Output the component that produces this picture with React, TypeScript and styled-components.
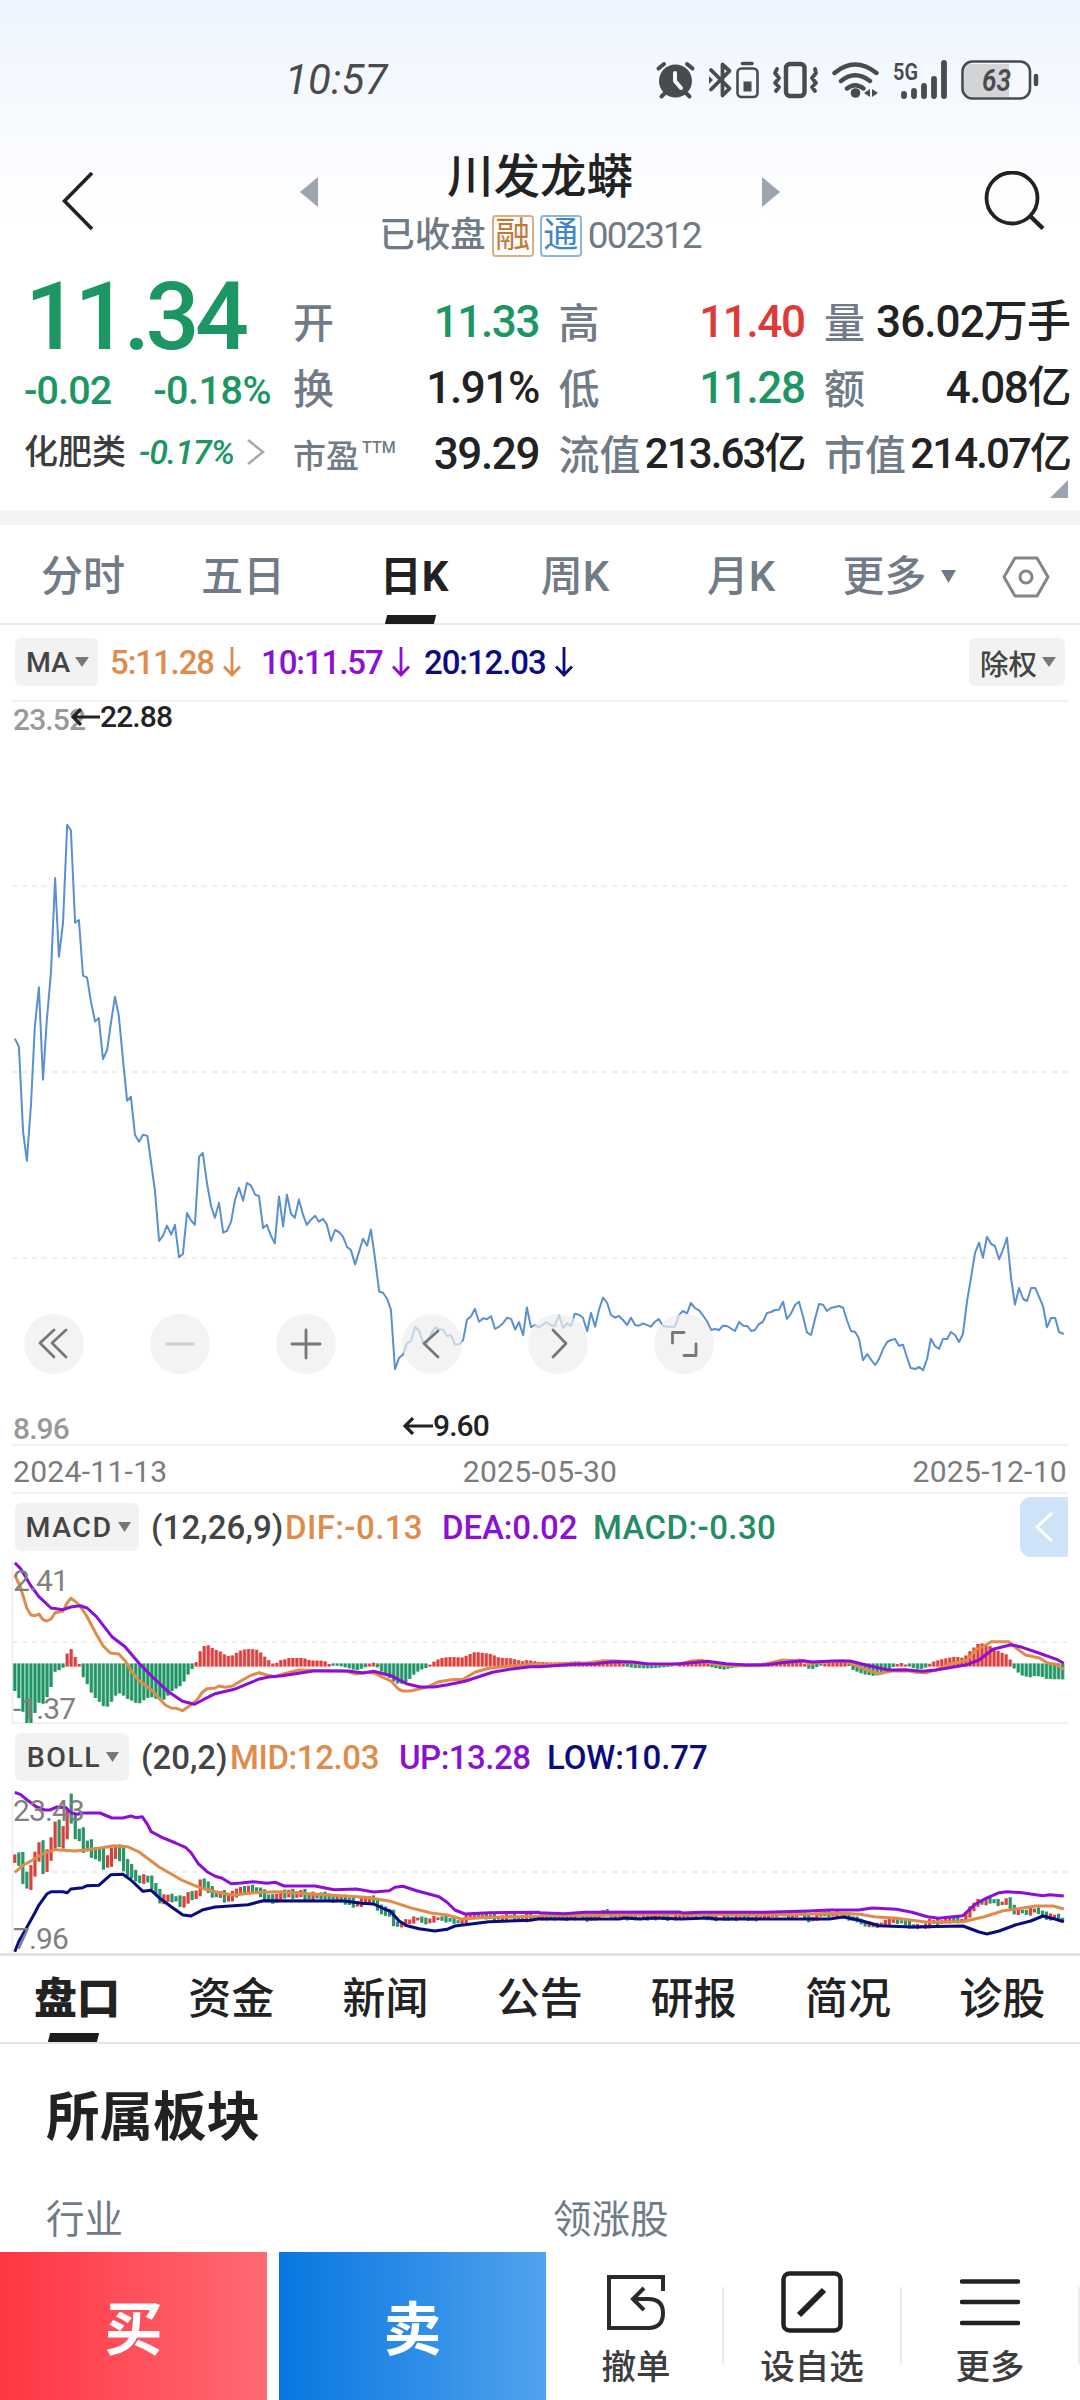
import React from "react";
import styled, { createGlobalStyle } from "styled-components";

const INK = "#222222";
const SLATE = "#707b87";
const GREEN = "#1c9663";
const RED = "#dd3b38";
const ORANGE = "#df8c4b";
const PURPLE = "#8b0fd4";
const NAVY = "#0b0b80";

const Global = createGlobalStyle`
  * { box-sizing: border-box; }
  body { margin: 0; background: #fff; }
  svg { display: block; flex: none; }
`;

const Page = styled.div`
  width: 1080px;
  height: 2400px;
  overflow: hidden;
  display: flex;
  flex-direction: column;
  background: #fff;
  color: ${INK};
  line-height: 1;
  white-space: nowrap;
  font-family: Roboto, "Noto Sans CJK SC", sans-serif;
`;

const Txt = styled.span<{ $s: number; $c?: string; $w?: number; $ls?: number; $dy?: number }>`
  font-size: ${(p) => p.$s}px;
  color: ${(p) => p.$c ?? INK};
  font-weight: ${(p) => p.$w ?? 400};
  letter-spacing: ${(p) => p.$ls ?? 0}px;
  padding-top: ${(p) => p.$dy ?? 0}px;
`;

/* ---------- header ---------- */

const Top = styled.header`
  flex: none;
  height: 265px;
  background: linear-gradient(#eef5ff, #fff 82%);
`;

const StatusBar = styled.div`
  height: 120px;
  padding: 40px 36px 0 285px;
  display: flex;
  align-items: center;
  justify-content: space-between;
`;

const Clock = styled.span`
  font-size: 42px;
  font-style: italic;
  letter-spacing: 0.2px;
  color: #4a4b4d;
`;

const StatusIcons = styled.div`
  display: flex;
  align-items: center;
`;

const Nav = styled.div`
  height: 145px;
  padding: 28px 35px 0 62px;
  display: flex;
`;

const NavIcon = styled.div<{ $end?: boolean }>`
  padding-top: 23px;
  margin-left: ${(p) => (p.$end ? "auto" : "0")};
`;

const TitleBlock = styled.div`
  width: 480px;
  display: flex;
  flex-direction: column;
  align-items: center;
  margin-left: 206px;
`;

const TitleRow = styled.div`
  width: 480px;
  height: 58px;
  display: flex;
  align-items: center;
  justify-content: space-between;
`;

const Arrow = styled.svg`
  margin-top: 30px;
`;

const SubRow = styled.div`
  height: 65px;
  display: flex;
  align-items: center;
  gap: 6px;
`;

const Badge = styled.span<{ $c: string }>`
  width: 42px;
  height: 42px;
  display: grid;
  place-items: center;
  border: 2px solid ${(p) => p.$c}99;
  border-radius: 4px;
  font-size: 35px;
  color: ${(p) => p.$c};
`;

/* ---------- quote ---------- */

const Quote = styled.section`
  flex: none;
  height: 245px;
  padding: 24px 10px 0 24px;
  display: flex;
  gap: 22px;
  position: relative;
`;

const PriceCol = styled.div`
  width: 247px;
`;

const PriceRow = styled.div<{ $lift?: number; $drop?: number }>`
  height: 66px;
  padding-bottom: ${(p) => p.$lift ?? 0}px;
  padding-top: ${(p) => p.$drop ?? 0}px;
  display: flex;
  align-items: center;
  justify-content: space-between;
`;

const Big = styled.span`
  font-size: 95px;
  font-weight: 500;
  letter-spacing: -4.6px;
  margin-left: 1px;
  color: ${GREEN};
`;

const Stats = styled.div`
  flex: 1;
  display: grid;
  grid-template-columns: repeat(3, 246px);
  grid-auto-rows: 66px;
  column-gap: 19.5px;
`;

const Stat = styled.div`
  display: flex;
  align-items: center;
  justify-content: space-between;
`;

const Sup = styled.sup`
  font-size: 16px;
  vertical-align: 15px;
  line-height: 0;
  margin-left: 3px;
`;

const Corner = styled.svg`
  position: absolute;
  right: 12px;
  bottom: 12px;
`;

const Band = styled.div`
  flex: none;
  height: 15px;
  background: #f4f4f4;
`;

/* ---------- period tabs ---------- */

const Periods = styled.nav`
  flex: none;
  height: 100px;
  display: flex;
  border-bottom: 2px solid #ececec;
`;

const Period = styled.div<{ $x: number; $on?: boolean; $gap?: number; $pl?: number }>`
  width: ${(p) => p.$x}px;
  height: 99px;
  flex: none;
  display: flex;
  align-items: center;
  justify-content: center;
  gap: ${(p) => p.$gap ?? 0}px;
  position: relative;
  font-size: 42px;
  font-weight: ${(p) => (p.$on ? 700 : 500)};
  color: ${(p) => (p.$on ? INK : SLATE)};
  padding-top: 4px;
  padding-left: ${(p) => p.$pl ?? 0}px;
`;

const Mark = styled.i`
  position: absolute;
  bottom: 0;
  left: 50%;
  width: 49px;
  height: 9px;
  margin-left: -28px;
  background: #1c1c1c;
  transform: skewX(-14deg);
`;

/* ---------- indicators ---------- */

const Legend = styled.div<{ $h: number; $top: number; $right?: number }>`
  flex: none;
  height: ${(p) => p.$h}px;
  padding: ${(p) => p.$top}px ${(p) => p.$right ?? 12}px 0 15px;
  display: flex;
  align-items: flex-start;
`;

const Pick = styled.button<{ $w: number; $gap?: number }>`
  width: ${(p) => p.$w}px;
  height: 48px;
  flex: none;
  border: 0;
  padding: 0 0 0 2px;
  border-radius: 6px;
  background: #f2f2f2;
  color: #444;
  font: 500 28.5px Roboto, "Noto Sans CJK SC", sans-serif;
  letter-spacing: ${(p) => p.$gap ?? 0}px;
  display: flex;
  align-items: center;
  justify-content: center;
  gap: 5px;
`;

const Item = styled.span<{ $c: string; $w: number; $ls?: number; $pad?: number }>`
  width: ${(p) => p.$w}px;
  height: 48px;
  flex: none;
  padding-left: ${(p) => p.$pad ?? 0}px;
  display: flex;
  align-items: center;
  gap: 9px;
  font-size: 33px;
  font-weight: 500;
  letter-spacing: ${(p) => p.$ls ?? -1.1}px;
  color: ${(p) => p.$c};
`;

const Spacer = styled.div`
  flex: 1;
`;

const SideTab = styled.div`
  width: 48px;
  height: 60px;
  margin-top: -6px;
  border-radius: 11px 0 0 11px;
  background: #cee3f7;
  display: grid;
  place-items: center;
`;

const Pane = styled.div<{ $h: number }>`
  flex: none;
  height: ${(p) => p.$h}px;
  position: relative;
`;

const Label = styled.span<{ $x: number; $y: number; $c?: string; $w?: number }>`
  position: absolute;
  left: ${(p) => p.$x}px;
  top: ${(p) => p.$y}px;
  display: flex;
  align-items: center;
  font-size: 30px;
  letter-spacing: -0.9px;
  font-weight: ${(p) => p.$w ?? 400};
  color: ${(p) => p.$c ?? "#808080"};
`;

const Controls = styled.div`
  position: absolute;
  left: 24px;
  top: 614px;
  display: flex;
  gap: 66px;
`;

const Round = styled.button`
  width: 60px;
  height: 60px;
  padding: 0;
  border: 0;
  border-radius: 50%;
  background: rgba(238, 238, 238, 0.7);
`;

const Dates = styled.div`
  flex: none;
  height: 48px;
  margin: 0 12px;
  padding: 5px 1px 0 1px;
  border-bottom: 2px solid #efefef;
  display: flex;
  align-items: center;
  justify-content: space-between;
  font-size: 30px;
  letter-spacing: 0.3px;
  color: #7b7b7b;
`;

/* ---------- detail tabs and sectors ---------- */

const Tabs = styled.nav`
  flex: none;
  height: 91px;
  border-top: 3px solid #e4e4e4;
  border-bottom: 2px solid #e4e4e4;
  display: grid;
  grid-template-columns: repeat(7, 154.2px);
  margin-right: -12px;
`;

const Tab = styled.div<{ $on?: boolean }>`
  display: flex;
  align-items: center;
  justify-content: center;
  position: relative;
  font-size: 43px;
  font-weight: ${(p) => (p.$on ? 800 : 500)};
`;

const Sectors = styled.section`
  flex: none;
  height: 208px;
  padding: 39px 46px 0;
`;

const Heading = styled.h2`
  margin: 0;
  font-size: 53.5px;
  line-height: 60px;
  font-weight: 700;
  font-family: "Noto Sans CJK SC", sans-serif;
`;

const Cols = styled.div`
  display: grid;
  grid-template-columns: 507px 1fr;
  padding-top: 58px;
  font-size: 38.5px;
  color: ${SLATE};
`;

/* ---------- trade bar ---------- */

const TradeBar = styled.footer`
  flex: none;
  height: 148px;
  display: flex;
  background: #fff;
`;

const Trade = styled.button<{ $from: string; $to: string }>`
  width: 267px;
  margin-right: 12px;
  border: 0;
  padding: 0 0 2px;
  background: linear-gradient(90deg, ${(p) => p.$from}, ${(p) => p.$to});
  color: #fff;
  font: 700 58px Roboto, "Noto Sans CJK SC", sans-serif;
`;

const Tool = styled.div<{ $w: number; $pr?: number }>`
  width: ${(p) => p.$w}px;
  height: 77px;
  margin-top: 35px;
  padding-right: ${(p) => p.$pr ?? 0}px;
  border-right: 2px solid #ececec;
  display: flex;
  flex-direction: column;
  align-items: center;
  font-size: 34.5px;
  font-weight: 500;
  color: #3d3d3d;
  & > svg { margin: -16px 0 17px; }
`;

/* ---------- data ---------- */

type Pt = [number, number];

const parse = (s: string): Pt[] =>
  s.trim().split(/\s+/).map((q) => q.split(",").map(Number) as Pt);

const KX = 1568 / 540;

/** Joins the two halves of a series into one list in page units. */
const series = (left: string, right: string, kyL: number, kyR: number, y0L = 0, y0R = 0): Pt[] => [
  ...parse(left).map(([x, y]): Pt => [x / KX, y0L + y / kyL]),
  ...parse(right).map(([x, y]): Pt => [540 + x / KX, y0R + y / kyR]),
];

const path = (pts: Pt[]) => pts.map(([x, y]) => `${x.toFixed(1)},${y.toFixed(1)}`).join(" ");

const at = (pts: Pt[], x: number) => {
  let i = 1;
  while (i < pts.length - 1 && pts[i][0] < x) i++;
  const [a, b] = [pts[i - 1], pts[i]];
  const t = Math.min(1, Math.max(0, (x - a[0]) / (b[0] - a[0] || 1)));
  return a[1] + (b[1] - a[1]) * t;
};

const price = series(
  `43,654 55,674 67,890 78,963 90,820 101,625 113,524 125,758 136,608 148,485 160,248 171,447 183,362 195,113 206,127 218,361 229,354 241,495 253,500 264,560 276,611 287,602 299,706 311,683 322,615 334,548 345,596 357,705 369,811 380,801 392,898 404,915 415,897 428,900 439,970 450,1040 462,1166 473,1153 485,1127 497,1150 508,1125 520,1207 531,1199 543,1095 555,1114 566,1125 578,953 589,943 601,1020 613,1078 624,1107 636,1069 648,1145 659,1140 671,1117 682,1063 694,1031 706,1064 717,1019 729,1026 741,1049 752,1052 764,1133 775,1125 787,1153 798,1172 810,1053 822,1129 833,1049 845,1097 856,1107 868,1061 880,1100 891,1125 903,1112 915,1102 926,1117 938,1110 949,1124 961,1166 973,1138 984,1143 996,1155 1008,1181 1019,1189 1031,1225 1042,1194 1054,1160 1066,1178 1077,1137 1089,1210 1101,1294 1112,1297 1124,1312 1135,1339 1147,1490 1159,1461 1170,1454 1182,1424 1194,1418 1205,1383 1217,1393 1229,1425 1240,1424 1252,1400 1263,1385 1275,1389 1287,1390 1298,1406 1310,1404 1321,1428 1333,1428 1345,1416 1356,1365 1368,1356 1379,1337 1391,1370 1403,1361 1414,1364 1426,1356 1437,1388 1449,1383 1461,1373 1472,1360 1484,1363 1496,1390 1507,1371 1519,1404 1530,1334 1542,1384 1554,1378 1563,1384`,
  `0,440 18,426 32,436 43,438 55,405 67,444 78,430 90,438 101,401 113,404 125,413 137,454 148,398 160,440 171,390 183,353 195,369 206,405 218,413 229,408 241,420 253,435 264,413 276,435 287,437 299,430 322,440 333,426 345,417 357,437 368,440 392,440 404,405 415,393 427,400 438,369 450,384 462,391 474,407 485,424 497,450 508,447 520,450 531,437 543,438 566,453 578,426 590,437 602,438 613,453 624,450 636,432 647,426 659,399 671,396 682,390 694,389 706,365 717,417 729,400 741,374 752,365 764,410 775,457 787,465 799,415 810,372 822,374 833,393 845,384 868,378 880,383 892,423 903,453 915,456 926,475 938,541 950,522 961,539 973,555 984,538 996,508 1008,486 1019,480 1031,477 1042,497 1054,494 1065,530 1076,564 1090,567 1101,561 1112,571 1124,537 1135,476 1147,498 1159,507 1170,477 1182,477 1193,456 1205,465 1217,486 1228,462 1240,365 1252,290 1263,219 1275,188 1286,233 1298,170 1310,192 1321,198 1333,238 1345,207 1356,173 1368,295 1379,374 1391,324 1403,357 1414,363 1426,324 1438,324 1449,350 1461,380 1472,442 1484,414 1496,414 1507,456 1521,462`,
  1568 / 620, 3, 80, 480
);

const dif = series(
  `43,285 58,318 78,385 90,405 102,407 113,402 125,419 136,423 148,417 160,398 183,393 195,368 206,355 218,364 232,378 250,405 276,456 299,497 320,519 345,522 363,542 386,580 404,602 440,630 462,655 480,675 497,684 512,685 530,692 555,674 572,660 587,637 601,626 625,624 636,618 655,622 675,618 700,602 729,586 752,578 775,585 798,590 822,582 868,570 950,572 1000,573 1035,582 1060,577 1089,580 1112,592 1135,603 1158,628 1170,633 1195,632 1240,621 1275,605 1310,599 1345,598 1380,576 1420,565 1480,558 1566,552`,
  `0,555 60,551 130,550 185,543 230,543 290,551 370,554 415,550 440,543 470,541 500,551 545,557 640,557 670,548 706,540 740,543 752,540 770,545 785,554 800,548 880,542 915,556 950,570 985,581 1020,573 1070,572 1090,577 1120,578 1150,570 1190,553 1240,540 1265,510 1290,498 1310,485 1360,485 1390,510 1410,525 1450,534 1475,550 1495,552 1521,568`,
  3, 3, -81, -81
);

const dea = series(
  `43,248 60,266 90,318 113,350 148,384 183,389 206,381 232,377 253,384 280,410 325,470 363,500 404,550 440,588 485,632 530,664 565,673 590,659 625,641 680,628 750,598 780,591 820,587 910,573 1010,573 1055,579 1085,574 1135,587 1180,611 1220,621 1260,621 1300,614 1350,604 1430,577 1480,568 1540,560 1566,560`,
  `0,560 100,553 160,551 210,545 270,546 310,551 400,552 485,544 540,551 600,555 660,554 700,548 765,542 790,546 850,543 900,543 950,556 1010,570 1060,569 1110,574 1150,570 1240,554 1275,540 1315,508 1368,494 1400,502 1440,516 1500,538 1521,550`,
  3, 3, -81, -81
);

const histogram = series(
  `43,633 55,655 67,697 78,735 90,735 101,700 113,668 125,671 136,653 148,622 160,575 172,570 183,564 195,521 206,506 218,530 229,548 241,590 253,611 264,636 276,653 287,663 299,678 311,681 322,668 334,648 345,639 357,645 369,656 380,660 392,668 404,671 415,662 428,654 439,651 450,655 462,660 473,662 485,650 497,635 508,627 520,621 531,611 543,588 555,570 566,558 578,520 589,500 601,494 613,502 624,509 636,512 648,521 659,528 671,529 682,522 694,513 717,507 741,508 752,512 764,526 775,536 787,546 798,557 810,539 822,542 833,534 880,534 903,542 938,542 949,546 961,557 984,557 1008,563 1031,570 1042,570 1054,564 1066,560 1077,545 1089,550 1101,570 1112,577 1124,585 1135,598 1147,608 1159,612 1170,610 1182,605 1194,592 1205,580 1217,572 1229,566 1240,563 1252,550 1263,543 1275,537 1287,533 1310,531 1345,533 1356,526 1380,516 1426,522 1449,533 1484,535 1519,544 1530,540 1566,546`,
  `0,546 40,548 110,544 150,548 183,539 230,541 241,550 253,560 276,564 320,565 380,560 404,553 415,546 450,540 485,544 497,561 531,569 560,563 630,556 648,549 706,537 752,538 764,544 775,563 787,569 799,563 815,557 833,547 870,543 890,547 903,567 938,582 973,588 1008,575 1031,557 1042,549 1054,549 1066,557 1090,566 1112,567 1124,560 1135,547 1170,537 1205,530 1230,534 1250,512 1275,489 1298,493 1321,508 1345,520 1356,524 1368,543 1379,570 1391,579 1403,588 1426,592 1438,587 1461,591 1472,597 1521,598`,
  3, 3, -81, -81
);

const upper = series(
  `43,217 60,224 80,241 105,260 130,270 145,270 165,261 192,263 206,278 225,283 240,279 290,279 325,294 357,294 380,288 395,293 413,290 428,313 439,335 470,352 510,369 540,383 555,398 575,430 601,455 625,469 645,475 671,491 700,489 735,485 775,490 800,487 825,498 915,498 970,509 1035,507 1085,516 1130,512 1147,502 1170,499 1210,512 1275,530 1298,547 1321,570 1350,582 1420,578 1566,577`,
  `0,578 70,581 130,577 405,576 415,579 470,577 650,577 780,573 840,570 925,570 965,564 1035,568 1080,577 1125,590 1158,595 1185,592 1228,587 1263,553 1295,535 1333,518 1356,515 1400,518 1460,527 1480,524 1521,528`,
  3, 3, -71, -71
);

const middle = series(
  `43,457 67,436 95,420 125,401 160,389 220,393 280,386 330,377 370,380 404,396 462,441 531,482 580,503 640,519 680,525 740,518 800,515 1060,532 1135,544 1194,564 1252,579 1298,585 1340,597 1400,593 1566,588`,
  `0,586 130,586 405,583 700,584 800,582 870,580 930,583 970,590 1035,595 1120,606 1228,605 1290,590 1345,572 1403,564 1440,558 1490,558 1521,567`,
  3, 3, -71, -71
);

const lower = series(
  `43,695 55,664 78,622 101,579 113,555 136,522 148,515 183,515 195,518 206,507 240,503 253,497 287,496 322,464 357,463 380,480 415,514 439,511 462,533 497,560 531,585 555,588 590,569 625,561 720,554 764,542 1000,543 1050,550 1085,552 1112,565 1135,575 1159,603 1182,617 1217,626 1263,633 1298,628 1321,618 1420,605 1540,601 1566,596`,
  `0,597 230,597 245,594 290,597 330,594 410,597 490,594 510,597 840,597 880,591 925,600 985,617 1080,621 1228,618 1275,636 1298,642 1333,633 1380,615 1425,603 1460,588 1495,597 1521,605`,
  3, 3, -71, -71
);

const STEP = 4.03;
const days = Array.from({ length: 261 }, (_, i) => 14.8 + i * STEP);

/** Maps a y of the price pane to the y of the band pane. */
const toBand = (y: number) => {
  const value = 23.52 - (y / 744) * 14.56;
  return ((23.43 - value) / 15.47) * 162;
};

/* ---------- small drawings ---------- */

const Down = ({ w, h, c = "#777" }: { w: number; h: number; c?: string }) => (
  <svg width={w} height={h} viewBox="0 0 10 10" preserveAspectRatio="none">
    <path d="M0 0H10L5 10Z" fill={c} />
  </svg>
);

const Drop = ({ c }: { c: string }) => (
  <svg width="18" height="30" viewBox="0 0 18 30" fill="none" stroke={c} strokeWidth="2.8">
    <path d="M9 0V28M1 19.500L9 28L17 19.500" />
  </svg>
);

const Left = ({ w }: { w: number }) => (
  <svg width={w} height="18" viewBox={`0 0 ${w} 18`} fill="none" stroke={INK} strokeWidth="3.200">
    <path d={`M${w} 9H2M10 1L2 9L10 17`} />
  </svg>
);

const glyphs = [
  "M30 16L16 29L30 43M42 16L28 29L42 43",
  "M17 30H43",
  "M16 30H44M30 16V44",
  "M36 17L22 29.500L36 43",
  "M25 16L38 29.500L25 43",
  "M18.500 29V18.500H30M30 41.500H42V30",
];

const Divider = ({ y }: { y: number }) => (
  <line x1="12" x2="1068" y1={y} y2={y} stroke="#efefef" strokeWidth="2" strokeDasharray="5 5" />
);

const G = "#4a4b4d";

const StatusDrawings = () => (
  <StatusIcons>
    <svg width="390" height="44" viewBox="654 58 390 44" fill="none" stroke={G} strokeWidth="3.500" strokeLinecap="round" strokeLinejoin="round">
      <circle cx="675.500" cy="81" r="16.500" fill={G} stroke="none" />
      <path d="M658.500 68.500L664 64M692.500 68.500L687 64M665 93L661.500 96.500M686 93L689.500 96.500" strokeWidth="4" />
      <path d="M675 73V81L681 88" stroke="#f5f9ff" strokeWidth="4" />
      <path d="M711 70L729.500 88.500L722.500 95.500V64.500L729.500 71L711 89.500" strokeWidth="3.800" />
      <path d="M709 76V84L713 80Z" fill={G} stroke="none" />
      <rect x="737.500" y="68.500" width="20" height="28.500" rx="4" strokeWidth="2.600" />
      <path d="M742.500 63.500H752" />
      <rect x="743.500" y="81.500" width="8" height="10" fill={G} stroke="none" />
      <rect x="786" y="64" width="18.500" height="32" rx="4" strokeWidth="4.400" />
      <path d="M777 69L775 73L779 78L775 83L779 87L776 91M815 69L816 73L812 78L816 83L812 87L815 91" strokeWidth="3.800" />
      <path d="M834.500 73Q855 56 876.500 73M841 81Q855 69.500 870 81M847 88.500Q855 82 863.500 88.500" strokeWidth="4.400" />
      <circle cx="855.500" cy="93" r="4.800" fill={G} stroke="none" />
      <path d="M864 93L870 89V97ZM878 93L872 89V97Z" fill={G} stroke="none" />
      <path d="M904 97V99M914 94V99M924 89V99M934 82V99M944 66V99" transform="translate(0 -3)" strokeWidth="5.800" />
      <path d="M964.500 64H1009V97H972Q964 97 964 89Z" fill="#d2d4d8" stroke="none" />
      <rect x="962.500" y="61.500" width="67.500" height="37" rx="10" strokeWidth="2.600" />
      <path d="M1036 76V84" strokeWidth="4.500" />
      <text x="893" y="80" fill={G} stroke="none" fontSize="24" fontWeight="600" fontFamily="Roboto, sans-serif" textLength="25" lengthAdjust="spacingAndGlyphs">5G</text>
      <text x="982" y="91" fill={G} stroke="none" fontSize="32" fontWeight="600" fontStyle="italic" fontFamily="Roboto, sans-serif" textLength="29" lengthAdjust="spacingAndGlyphs">63</text>
    </svg>
  </StatusIcons>
);

const stats: { k: React.ReactNode; v: string; c?: string; ks?: number; vs?: number; ls?: number }[] = [
  { k: "开", v: "11.33", c: GREEN },
  { k: "高", v: "11.40", c: RED },
  { k: "量", v: "36.02万手", ls: -0.9 },
  { k: "换", v: "1.91%" },
  { k: "低", v: "11.28", c: GREEN },
  { k: "额", v: "4.08亿" },
  { k: <>市盈<Sup>TTM</Sup></>, v: "39.29", ks: 33 },
  { k: "流值", v: "213.63亿", vs: 42, ls: -1.9 },
  { k: "市值", v: "214.07亿", vs: 42, ls: -1.9 },
];

export default function App() {
  return (
    <Page>
      <Global />
      <Top>
        <StatusBar>
          <Clock>10:57</Clock>
          <StatusDrawings />
        </StatusBar>
        <Nav>
          <NavIcon>
            <svg width="32" height="60" viewBox="0 0 32 60" fill="none" stroke={INK} strokeWidth="3.600">
              <path d="M30 2L2.500 30L30 58" />
            </svg>
          </NavIcon>
          <TitleBlock>
            <TitleRow>
              <Arrow width="18" height="30"><path d="M18 0V30L0 15Z" fill="#9ba4af" /></Arrow>
              <Txt $s={46.5} $w={500}>川发龙蟒</Txt>
              <Arrow width="18" height="30"><path d="M0 0V30L18 15Z" fill="#9ba4af" /></Arrow>
            </TitleRow>
            <SubRow>
              <Txt $s={35.5} $w={500} $c={SLATE}>已收盘</Txt>
              <Badge $c="#c07a35">融</Badge>
              <Badge $c="#3f86c4">通</Badge>
              <Txt $s={37} $c={SLATE} $ls={-2} $w={400}>002312</Txt>
            </SubRow>
          </TitleBlock>
          <NavIcon $end>
            <svg width="61" height="60" viewBox="0 0 61 60" fill="none" stroke={INK} strokeWidth="3.800">
              <circle cx="28" cy="27" r="25.500" />
              <path d="M46 45L59 57.500" strokeWidth="4.500" />
            </svg>
          </NavIcon>
        </Nav>
      </Top>

      <Quote>
        <PriceCol>
          <PriceRow $lift={11}><Big>11.34</Big></PriceRow>
          <PriceRow $drop={5}>
            <Txt $s={39.5} $w={500} $c={GREEN} $ls={-0.9}>-0.02</Txt>
            <Txt $s={39.5} $w={500} $c={GREEN} $ls={-0.5}>-0.18%</Txt>
          </PriceRow>
          <PriceRow $lift={5}>
            <Txt $s={34} $w={500} $c="#3c3c3c">化肥类</Txt>
            <Txt $s={34} $w={500} $c={GREEN} $ls={-1}><i>-0.17%</i></Txt>
            <svg width="24" height="26" viewBox="0 0 24 26" fill="none" stroke="#a3abb5" strokeWidth="2.500">
              <path d="M1 1L16 13L1 25" />
            </svg>
          </PriceRow>
        </PriceCol>
        <Stats>
          {stats.map((q, i) => (
            <Stat key={i}>
              <Txt $s={q.ks ?? 41} $w={500} $c={SLATE} $dy={4}>{q.k}</Txt>
              <Txt $s={q.vs ?? 44} $w={500} $c={q.c} $ls={q.ls ?? -1.4}>{q.v}</Txt>
            </Stat>
          ))}
        </Stats>
        <Corner width="18" height="18"><path d="M18 0V18H0Z" fill="#9ba4af" /></Corner>
      </Quote>
      <Band />

      <Periods>
        <Period $x={166}>分时</Period>
        <Period $x={154}>五日</Period>
        <Period $x={188} $on>日K<Mark /></Period>
        <Period $x={134}>周K</Period>
        <Period $x={198}>月K</Period>
        <Period $x={118} $gap={14}>更多<Down w={15} h={13} c={SLATE} /></Period>
        <Period $x={122} $pl={14}>
          <svg width="48" height="42" viewBox="0 0 48 42" fill="none" stroke="#858585" strokeWidth="3">
            <path d="M13 2H35L46 21L35 40H13L2 21Z" strokeLinejoin="round" />
            <circle cx="24" cy="21" r="6" />
          </svg>
        </Period>
      </Periods>

      <Legend $h={75} $top={13} $right={15}>
        <Pick $w={83}>MA<Down w={14} h={10} /></Pick>
        <Item $c={ORANGE} $w={163} $pad={12}>5:11.28<Drop c={ORANGE} /></Item>
        <Item $c={PURPLE} $w={163}>10:11.57<Drop c={PURPLE} /></Item>
        <Item $c={NAVY} $w={170}>20:12.03<Drop c={NAVY} /></Item>
        <Spacer />
        <Pick $w={96}>除权<Down w={14} h={10} /></Pick>
      </Legend>

      <Pane $h={746}>
        <svg width="1080" height="746" viewBox="0 0 1080 746" fill="none">
          <path d="M12 1H1068M12 745H1068" stroke="#f0f0f0" strokeWidth="2" />
          <Divider y={186} /><Divider y={372} /><Divider y={558} />
          <polyline points={path(price)} stroke="#5a8fd0" strokeWidth="2" strokeLinejoin="round" />
        </svg>
        <Label $x={13} $y={5} $c="#999" $w={500}>23.52</Label>
        <Label $x={71} $y={2} $c={INK} $w={500}><Left w={29} />22.88</Label>
        <Label $x={13} $y={714} $c="#999" $w={500}>8.96</Label>
        <Label $x={403} $y={711} $c={INK} $w={500}><Left w={30} />9.60</Label>
        <Controls>
          {glyphs.map((d, i) => (
            <Round key={i}>
              <svg width="60" height="60" fill="none" stroke={i === 1 ? "#ccc" : "#777"} strokeWidth="2.800" strokeLinecap="round" strokeLinejoin="round">
                <path d={d} />
              </svg>
            </Round>
          ))}
        </Controls>
      </Pane>

      <Dates>
        <span>2024-11-13</span>
        <span>2025-05-30</span>
        <span>2025-12-10</span>
      </Dates>

      <Legend $h={67} $top={9}>
        <Pick $w={124} $gap={1.5}>MACD<Down w={13} h={10} /></Pick>
        <Item $c="#444" $w={146} $pad={12} $ls={0.1}>(12,26,9)</Item>
        <Item $c={ORANGE} $w={157} $ls={0.4}>DIF:-0.13</Item>
        <Item $c={PURPLE} $w={151} $ls={-0.1}>DEA:0.02</Item>
        <Item $c="#268c63" $w={190} $ls={0.4}>MACD:-0.30</Item>
        <Spacer />
        <SideTab>
          <svg width="18" height="30" viewBox="0 0 18 30" fill="none" stroke="#fff" strokeWidth="3">
            <path d="M17 1L2 15L17 29" />
          </svg>
        </SideTab>
      </Legend>

      <Pane $h={163}>
        <svg width="1080" height="163" viewBox="0 0 1080 163" fill="none">
          <path d="M12.500 0V162H1068" stroke="#ebebeb" strokeWidth="1.500" />
          <Divider y={81} />
          {days.map((x, i) => {
            const tip = Math.min(at(histogram, x), 162);
            const up = tip < 104;
            const base = up ? 105.5 : 102.500;
            return (
              <g key={i}>
                <line x1={x} x2={x} y1={base} y2={tip} stroke={up ? "#ff8f8c" : "#78cfa9"} strokeWidth="4" />
                <line x1={x} x2={x} y1={base} y2={tip} stroke={up ? "#d24441" : "#268f64"} strokeWidth="2.400" />
              </g>
            );
          })}
          <polyline points={path(dif)} stroke={ORANGE} strokeWidth="3" strokeLinejoin="round" />
          <polyline points={path(dea)} stroke={PURPLE} strokeWidth="3" strokeLinejoin="round" />
        </svg>
        <Label $x={13} $y={5}>2.41</Label>
        <Label $x={13} $y={133}>-1.37</Label>
      </Pane>

      <Legend $h={67} $top={9}>
        <Pick $w={114} $gap={1.5}>BOLL<Down w={13} h={10} /></Pick>
        <Item $c="#444" $w={101} $pad={12} $ls={0}>(20,2)</Item>
        <Item $c={ORANGE} $w={169} $ls={-0.4}>MID:12.03</Item>
        <Item $c={PURPLE} $w={148} $ls={-0.5}>UP:13.28</Item>
        <Item $c={NAVY} $w={170} $ls={-0.1}>LOW:10.77</Item>
      </Legend>

      <Pane $h={162}>
        <svg width="1080" height="162" viewBox="0 0 1080 162" fill="none">
          <path d="M12.500 0V162" stroke="#ebebeb" strokeWidth="1.500" />
          <Divider y={81} />
          {days.map((x, i) => {
            const y = toBand(at(price, x));
            const prev = toBand(at(price, x - STEP));
            const wick = (i < 30 ? 5 : i < 95 ? 3 : 1.500) + ((i * 7) % 5) * (i < 30 ? 1 : 0.5);
            const lift = i === 14 ? 14 : 0;
            return (
              <line key={i} x1={x} x2={x} y1={Math.min(y, prev) - wick - lift} y2={Math.max(y, prev) + wick * 0.7} stroke={y <= prev ? "#d8423c" : "#2b9468"} strokeWidth="3.200" />
            );
          })}
          <polyline points={path(middle)} stroke={ORANGE} strokeWidth="3" strokeLinejoin="round" />
          <polyline points={path(upper)} stroke={PURPLE} strokeWidth="3" strokeLinejoin="round" />
          <polyline points={path(lower)} stroke={NAVY} strokeWidth="3" strokeLinejoin="round" />
        </svg>
        <Label $x={13} $y={5}>23.43</Label>
        <Label $x={13} $y={133}>7.96</Label>
      </Pane>

      <Tabs>
        {["盘口", "资金", "新闻", "公告", "研报", "简况", "诊股"].map((t, i) => (
          <Tab key={t} $on={i === 0}>{t}{i === 0 && <Mark />}</Tab>
        ))}
      </Tabs>

      <Sectors>
        <Heading>所属板块</Heading>
        <Cols><span>行业</span><span>领涨股</span></Cols>
      </Sectors>

      <TradeBar>
        <Trade $from="#ff3643" $to="#ff6a73">买</Trade>
        <Trade $from="#0877df" $to="#51a2ef">卖</Trade>
        <Tool $w={166} $pr={8}>
          <svg width="60" height="62" viewBox="0 0 60 62" fill="none" stroke="#2a2a2a" strokeWidth="4">
            <path d="M57 20V6H3V57H44Q57 56 57 42Q57 28 42 28H28" />
            <path d="M38 17L27 28L38 39" />
          </svg>
          撤单
        </Tool>
        <Tool $w={178}>
          <svg width="62" height="62" viewBox="0 0 62 62" fill="none" stroke={INK} strokeWidth="4.500">
            <rect x="2.500" y="2.500" width="57" height="57" rx="6" />
            <path d="M18 44L43 19" strokeWidth="6" />
          </svg>
          设自选
        </Tool>
        <Tool $w={178}>
          <svg width="60" height="62" viewBox="0 0 60 62" fill="none" stroke={INK} strokeWidth="4.500" strokeLinecap="round">
            <path d="M2 10.500H58M2 31H58M2 52H58" />
          </svg>
          更多
        </Tool>
      </TradeBar>
    </Page>
  );
}
